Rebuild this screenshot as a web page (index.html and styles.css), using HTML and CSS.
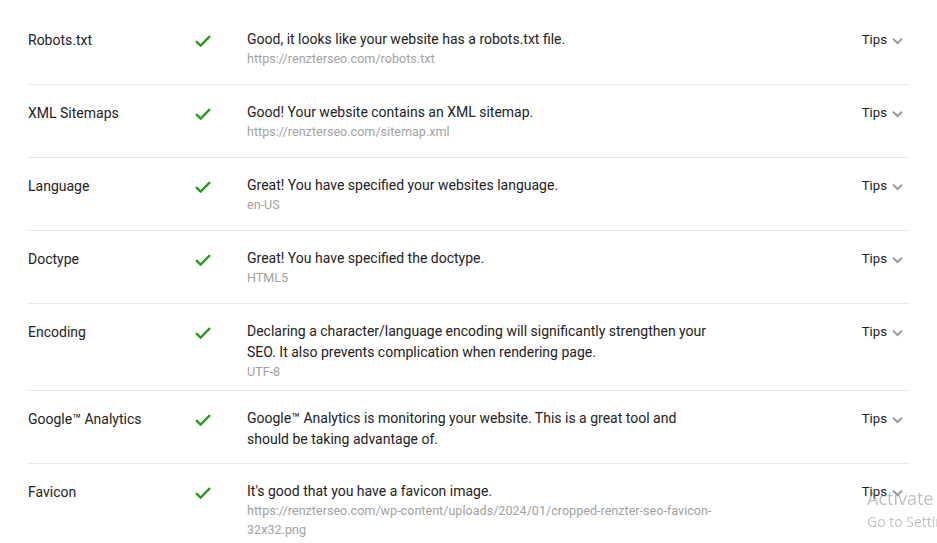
FILE: index.html
```html
<!DOCTYPE html>
<html lang="en">
<head>
<meta charset="utf-8">
<title>SEO Checks</title>
<link rel="stylesheet" href="styles.css">
</head>
<body>
<div class="list">
  <div class="row">
    <div class="label">Robots.txt</div>
    <div class="status"><svg class="check" viewBox="0 0 16 12"><path d="M1 6.2 L5.6 10.6 L15 1.2"/></svg></div>
    <div class="info">
      <div class="msg">Good, it looks like your website has a robots.txt file.</div>
      <div class="sub">https://renzterseo.com/robots.txt</div>
    </div>
    <div class="tips">Tips <svg class="chev" viewBox="0 0 12 8"><path d="M1 1.4 L6 6.2 L11 1.4"/></svg></div>
  </div>
  <div class="row">
    <div class="label">XML Sitemaps</div>
    <div class="status"><svg class="check" viewBox="0 0 16 12"><path d="M1 6.2 L5.6 10.6 L15 1.2"/></svg></div>
    <div class="info">
      <div class="msg">Good! Your website contains an XML sitemap.</div>
      <div class="sub">https://renzterseo.com/sitemap.xml</div>
    </div>
    <div class="tips">Tips <svg class="chev" viewBox="0 0 12 8"><path d="M1 1.4 L6 6.2 L11 1.4"/></svg></div>
  </div>
  <div class="row">
    <div class="label">Language</div>
    <div class="status"><svg class="check" viewBox="0 0 16 12"><path d="M1 6.2 L5.6 10.6 L15 1.2"/></svg></div>
    <div class="info">
      <div class="msg">Great! You have specified your websites language.</div>
      <div class="sub">en-US</div>
    </div>
    <div class="tips">Tips <svg class="chev" viewBox="0 0 12 8"><path d="M1 1.4 L6 6.2 L11 1.4"/></svg></div>
  </div>
  <div class="row">
    <div class="label">Doctype</div>
    <div class="status"><svg class="check" viewBox="0 0 16 12"><path d="M1 6.2 L5.6 10.6 L15 1.2"/></svg></div>
    <div class="info">
      <div class="msg">Great! You have specified the doctype.</div>
      <div class="sub">HTML5</div>
    </div>
    <div class="tips">Tips <svg class="chev" viewBox="0 0 12 8"><path d="M1 1.4 L6 6.2 L11 1.4"/></svg></div>
  </div>
  <div class="row">
    <div class="label">Encoding</div>
    <div class="status"><svg class="check" viewBox="0 0 16 12"><path d="M1 6.2 L5.6 10.6 L15 1.2"/></svg></div>
    <div class="info">
      <div class="msg">Declaring a character/language encoding will significantly strengthen your SEO. It also prevents complication when rendering page.</div>
      <div class="sub">UTF-8</div>
    </div>
    <div class="tips">Tips <svg class="chev" viewBox="0 0 12 8"><path d="M1 1.4 L6 6.2 L11 1.4"/></svg></div>
  </div>
  <div class="row">
    <div class="label">Google™ Analytics</div>
    <div class="status"><svg class="check" viewBox="0 0 16 12"><path d="M1 6.2 L5.6 10.6 L15 1.2"/></svg></div>
    <div class="info">
      <div class="msg">Google™ Analytics is monitoring your website. This is a great tool and should be taking advantage of.</div>
    </div>
    <div class="tips">Tips <svg class="chev" viewBox="0 0 12 8"><path d="M1 1.4 L6 6.2 L11 1.4"/></svg></div>
  </div>
  <div class="row">
    <div class="label">Favicon</div>
    <div class="status"><svg class="check" viewBox="0 0 16 12"><path d="M1 6.2 L5.6 10.6 L15 1.2"/></svg></div>
    <div class="info">
      <div class="msg">It's good that you have a favicon image.</div>
      <div class="sub">https://renzterseo.com/wp-content/uploads/2024/01/cropped-renzter-seo-favicon-32x32.png</div>
    </div>
    <div class="tips">Tips <svg class="chev" viewBox="0 0 12 8"><path d="M1 1.4 L6 6.2 L11 1.4"/></svg></div>
  </div>
</div>
<div class="watermark">
  <div class="wm-title">Activate Windows</div>
  <div class="wm-sub">Go to Settings to activate Windows.</div>
</div>
</body>
</html>
```

FILE: styles.css
```css
html, body {
  margin: 0;
  padding: 0;
  background: #ffffff;
  overflow: hidden;
}
body {
  font-family: Roboto, "Liberation Sans", Arial, sans-serif;
  font-size: 14px;
  color: #222222;
  width: 937px;
  height: 543px;
}
.list {
  padding: 12px 27px 0 28px;
}
.row {
  display: grid;
  grid-template-columns: 166px 53px 470px 1fr auto;
  align-items: start;
  min-height: 73px;
  box-sizing: border-box;
  padding: 18px 7px 9px 0;
  border-bottom: 1px solid #e9e9e9;
}
.label {
  line-height: 20px;
  color: #222;
}
.status {
  height: 20px;
  display: flex;
  align-items: center;
}
.check {
  width: 16px;
  height: 12px;
  margin-left: 1px;
  margin-top: 1px;
}
.check path {
  fill: none;
  stroke: #2a9c1c;
  stroke-width: 2.4;
}
.info {
  grid-column: 3;
}
.msg {
  line-height: 21px;
  margin-top: -1px;
  color: #222;
}
.sub {
  font-size: 12.6px;
  line-height: 19px;
  margin-top: -1px;
  color: #a2a2a2;
}
.tips {
  grid-column: 5;
  font-size: 13.2px;
  line-height: 20px;
  display: flex;
  align-items: center;
  gap: 5px;
  color: #222;
}
.chev {
  width: 11px;
  height: 8px;
  margin-top: 2px;
}
.chev path {
  fill: none;
  stroke: #9a9a9a;
  stroke-width: 2.2;
}
.watermark {
  position: fixed;
  left: 867px;
  top: 485px;
  white-space: nowrap;
  font-family: "Open Sans", "Noto Sans", sans-serif;
  color: rgba(120, 120, 120, 0.45);
}
.wm-title {
  font-size: 18px;
  line-height: 26px;
}
.wm-sub {
  font-size: 14px;
  line-height: 22px;
}
```
